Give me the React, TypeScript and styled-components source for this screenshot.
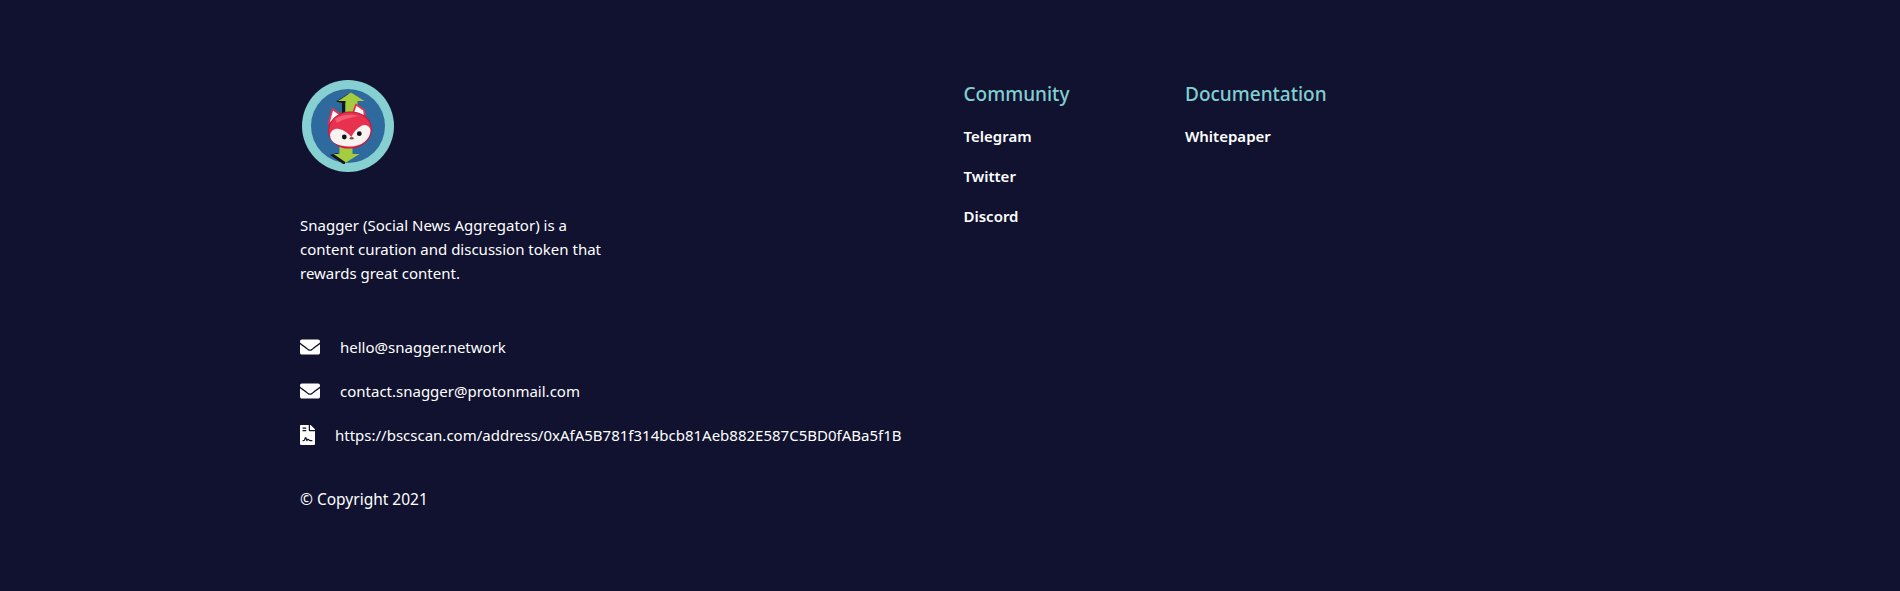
import React from "react";
import styled, { createGlobalStyle } from "styled-components";
import { FaEnvelope, FaFileContract } from "react-icons/fa";

const GlobalStyle = createGlobalStyle`
  html, body {
    margin: 0;
    padding: 0;
    background: #10122f;
  }
  body {
    font-family: "Noto Sans", "Open Sans", sans-serif;
    color: #fff;
  }
`;

const Footer = styled.footer`
  display: flex;
  box-sizing: border-box;
  height: 591px;
  padding: 79px 0 0 300px;
  background: #10122f;
`;

const InfoColumn = styled.div`
  width: 663.5px;
  flex-shrink: 0;
`;

const LinkColumn = styled.div<{ $width: number }>`
  width: ${(p) => p.$width}px;
  padding-top: 1px;
`;

const LogoWrap = styled.div`
  width: 94px;
  height: 92px;
  padding: 1px 0 0 1px;
  margin-bottom: 41px;
`;

const About = styled.p`
  width: 320px;
  margin: 0 0 50px;
  font-size: 15px;
  line-height: 24px;
`;

const ContactList = styled.ul`
  list-style: none;
  margin: 0 0 40px;
  padding: 0;
  display: flex;
  flex-direction: column;
  gap: 20px;
`;

const ContactRow = styled.li`
  display: flex;
  align-items: center;
  gap: 20px;
  height: 24px;
  font-size: 15px;
  svg {
    flex-shrink: 0;
    width: 20px;
    height: 20px;
  }
  svg.narrow {
    width: 15px;
  }
`;

const Copyright = styled.p`
  margin: 0;
  font-size: 15.5px;
  line-height: 24px;
`;

const Heading = styled.h4`
  margin: 0 0 16px;
  font-size: 19px;
  font-weight: 500;
  line-height: 28px;
  color: #80d0d2;
`;

const NavLink = styled.a`
  display: block;
  height: 40px;
  font-size: 15px;
  font-weight: 600;
  line-height: 24px;
  color: #fff;
  text-decoration: none;
`;

function Logo() {
  return (
    <svg width="94" height="92" viewBox="0 0 94 92">
      <circle cx="47" cy="46" r="46" fill="#86d0d2" />
      <circle cx="47" cy="46" r="37" fill="#2f6a9e" />
      {/* top arrow */}
      <path d="M35 21.5 L47 14 L47 23 L44 23 L44 34 L41 34 L41 23 Z" fill="#14161c" />
      <path d="M50 12.5 L63.5 21 L56.5 21 L56.5 34 L44.5 34 L44.5 21 L37 21 Z" fill="#a4cc3f" />
      {/* bottom arrow */}
      <path d="M29 75 L36 73 L44 80 L44 84 L42 84 Z" fill="#14161c" />
      <path d="M45 82.5 L32.5 74 L38.5 74 L38.5 62 L51.5 62 L51.5 74 L58.5 74 Z" fill="#a4cc3f" />
      {/* ears */}
      <path d="M31.5 29 L27.5 44 L41 36 Z" fill="#fff" stroke="#e8314f" strokeWidth="1.8" strokeLinejoin="round" />
      <path d="M55 24.5 L52 33 L64 38 L63 30 Z" fill="#fff" stroke="#e8314f" strokeWidth="1.8" strokeLinejoin="round" />
      {/* head */}
      <ellipse cx="49" cy="50" rx="21.5" ry="18" transform="rotate(-6 49 50)" fill="#e8314f" stroke="#c4173c" strokeWidth="1" />
      <path d="M29 55 C30 50 34 48 38 49 C43 50 47 53 50.5 57 C53 51 58 46 63 45 C66 44.5 69 47 69.5 50 C69.5 60 60 66.5 49 66.5 C38 66.5 29 63 29 55 Z" fill="#f8f3f1" />
      <path d="M34 39 C40 34.5 50 33.5 58 36 C50 37 42 39 36 43 Z" fill="#f45c73" />
      <circle cx="43.3" cy="57" r="2.4" fill="#111" />
      <circle cx="58.3" cy="53.7" r="2.4" fill="#111" />
      <ellipse cx="50.7" cy="58.3" rx="2" ry="1.2" fill="#8a4a3a" />
    </svg>
  );
}

export default function App() {
  return (
    <>
      <GlobalStyle />
      <Footer>
        <InfoColumn>
          <LogoWrap>
            <Logo />
          </LogoWrap>
          <About>
            Snagger (Social News Aggregator) is a content curation and discussion token that rewards great content.
          </About>
          <ContactList>
            <ContactRow>
              <FaEnvelope />
              hello@snagger.network
            </ContactRow>
            <ContactRow>
              <FaEnvelope />
              contact.snagger@protonmail.com
            </ContactRow>
            <ContactRow>
              <FaFileContract className="narrow" />
              https://bscscan.com/address/0xAfA5B781f314bcb81Aeb882E587C5BD0fABa5f1B
            </ContactRow>
          </ContactList>
          <Copyright>© Copyright 2021</Copyright>
        </InfoColumn>
        <LinkColumn $width={221.5}>
          <Heading>Community</Heading>
          <NavLink href="#">Telegram</NavLink>
          <NavLink href="#">Twitter</NavLink>
          <NavLink href="#">Discord</NavLink>
        </LinkColumn>
        <LinkColumn $width={221}>
          <Heading>Documentation</Heading>
          <NavLink href="#">Whitepaper</NavLink>
        </LinkColumn>
      </Footer>
    </>
  );
}
